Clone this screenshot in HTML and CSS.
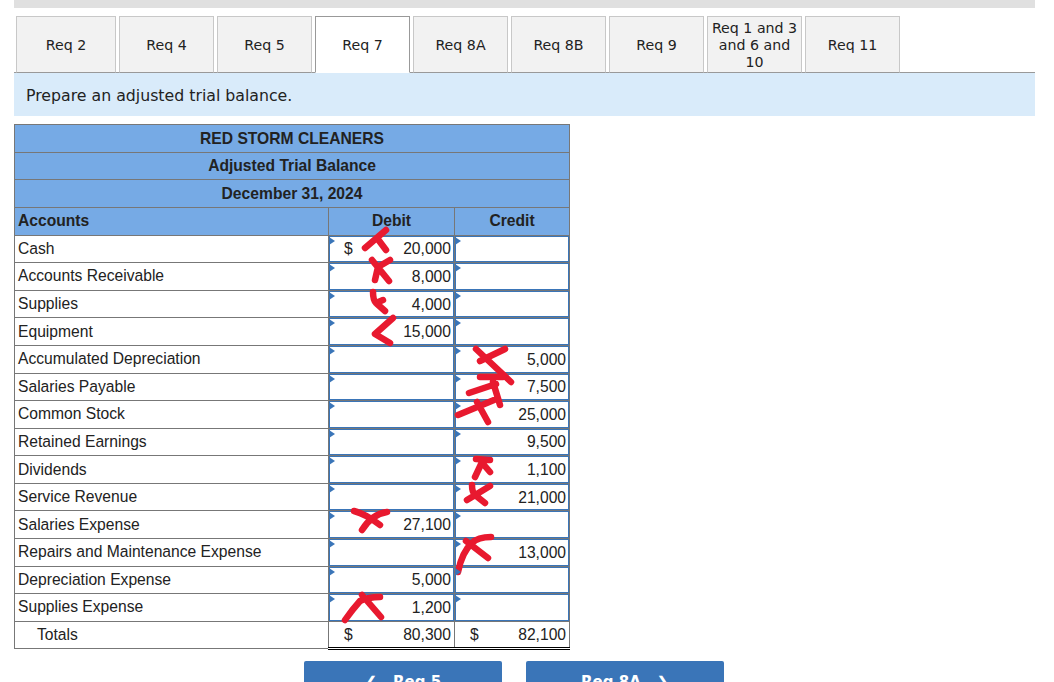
FILE: index.html
```html
<!DOCTYPE html>
<html lang="en">
<head>
<meta charset="utf-8">
<title>Adjusted Trial Balance</title>
<link rel="stylesheet" href="styles.css">
</head>
<body>
<main class="page">
  <div class="topbar"></div>
  <nav class="tabs">
    <div class="tab first">Req 2</div>
    <div class="tab second">Req 4</div>
    <div class="tab">Req 5</div>
    <div class="tab active">Req 7</div>
    <div class="tab">Req 8A</div>
    <div class="tab">Req 8B</div>
    <div class="tab">Req 9</div>
    <div class="tab">Req 1 and 3 and 6 and 10</div>
    <div class="tab">Req 11</div>
  </nav>
  <div class="prompt">Prepare an adjusted trial balance.</div>
  <table class="sheet">
    <colgroup><col class="c-acc"><col class="c-deb"><col class="c-cre"></colgroup>
    <thead>
      <tr><th colspan="3" class="title">RED STORM CLEANERS</th></tr>
      <tr><th colspan="3" class="title">Adjusted Trial Balance</th></tr>
      <tr><th colspan="3" class="title">December 31, 2024</th></tr>
      <tr><th class="acc">Accounts</th><th>Debit</th><th>Credit</th></tr>
    </thead>
    <tbody>
      <tr><td class="name">Cash</td><td class="in"><div class="box"><span class="cur">$</span><span>20,000</span></div></td><td class="in"><div class="box"></div></td></tr>
      <tr><td class="name">Accounts Receivable</td><td class="in"><div class="box"><span></span><span>8,000</span></div></td><td class="in"><div class="box"></div></td></tr>
      <tr><td class="name">Supplies</td><td class="in"><div class="box"><span></span><span>4,000</span></div></td><td class="in"><div class="box"></div></td></tr>
      <tr><td class="name">Equipment</td><td class="in"><div class="box"><span></span><span>15,000</span></div></td><td class="in"><div class="box"></div></td></tr>
      <tr><td class="name">Accumulated Depreciation</td><td class="in"><div class="box"></div></td><td class="in"><div class="box"><span></span><span>5,000</span></div></td></tr>
      <tr><td class="name">Salaries Payable</td><td class="in"><div class="box"></div></td><td class="in"><div class="box"><span></span><span>7,500</span></div></td></tr>
      <tr><td class="name">Common Stock</td><td class="in"><div class="box"></div></td><td class="in"><div class="box"><span></span><span>25,000</span></div></td></tr>
      <tr><td class="name">Retained Earnings</td><td class="in"><div class="box"></div></td><td class="in"><div class="box"><span></span><span>9,500</span></div></td></tr>
      <tr><td class="name">Dividends</td><td class="in"><div class="box"></div></td><td class="in"><div class="box"><span></span><span>1,100</span></div></td></tr>
      <tr><td class="name">Service Revenue</td><td class="in"><div class="box"></div></td><td class="in"><div class="box"><span></span><span>21,000</span></div></td></tr>
      <tr><td class="name">Salaries Expense</td><td class="in"><div class="box"><span></span><span>27,100</span></div></td><td class="in"><div class="box"></div></td></tr>
      <tr><td class="name">Repairs and Maintenance Expense</td><td class="in"><div class="box"></div></td><td class="in"><div class="box"><span></span><span>13,000</span></div></td></tr>
      <tr><td class="name">Depreciation Expense</td><td class="in"><div class="box"><span></span><span>5,000</span></div></td><td class="in"><div class="box"></div></td></tr>
      <tr><td class="name">Supplies Expense</td><td class="in"><div class="box"><span></span><span>1,200</span></div></td><td class="in"><div class="box"></div></td></tr>
      <tr class="totals"><td class="name total-name">Totals</td><td class="sum"><div class="plain"><span class="cur">$</span><span>80,300</span></div></td><td class="sum"><div class="plain"><span class="cur">$</span><span>82,100</span></div></td></tr>
    </tbody>
  </table>
  <div class="pager">
    <a class="btn">&#10094;&nbsp;&nbsp;&nbsp;Req 5</a>
    <a class="btn">Req 8A&nbsp;&nbsp;&nbsp;&#10095;</a>
  </div>
  <svg class="marks" viewBox="0 0 1054 682" width="1054" height="682" aria-hidden="true">
    <path d="M365 248L386 230M377 238L386 250"/>
    <path d="M390 260L378 267L375 280M372 260L389 281"/>
    <path d="M373 292Q373 300 376 303L385 311M376 303L383 300"/>
    <path d="M393 318L375 334L390 343"/>
    <path d="M476 349L511 382M505 349L480 361"/>
    <path d="M480 377L503 377M469 393L496 384M493 382L500 405M458 415L494 400M477 402L488 422"/>
    <path d="M476 459L490 460M483 460L475 477M484 465L490 472"/>
    <path d="M490 486L467 500M472 485Q472 492 475 495L485 503"/>
    <path d="M354 511Q366 514 380 525M387 512Q372 514 362 530"/>
    <path d="M491 537Q478 537 472 543Q462 552 458 572M466 541L488 558"/>
    <path d="M380 597Q368 597 360 601Q352 610 345 620M362 595L381 617"/>
  </svg>
</main>
</body>
</html>
```
FILE: styles.css
```css
* { box-sizing: border-box; }
html, body { margin: 0; height: 100%; overflow: hidden; background: #fff; }
.page { position: relative; width: 1054px; height: 682px; overflow: hidden; padding: 0 19px 0 14px; color: #222; }
.topbar { height: 8px; background: #e0e0e0; }
.tabs { display: flex; align-items: stretch; gap: 3px; height: 64.5px; padding: 8px 0 0 2px; border-bottom: 1px solid #999; font: 14.2px/17px "DejaVu Sans", sans-serif; }
.tab { width: 95px; margin-bottom: -1px; padding: 2px 3px 0; display: flex; align-items: center; justify-content: center; text-align: center; background: #f2f2f2; border: 1px solid #c8c8c8; border-bottom-color: #999; }
.tab.first { width: 100px; }
.tab.second { width: 95px; }
.tab.active { background: #fff; border-color: #999; border-bottom: 1px solid #fff; position: relative; z-index: 1; }
.prompt { height: 43.5px; padding: 2px 12px 0; display: flex; align-items: center; background: #d9ebfa; font: 15.75px "DejaVu Sans", sans-serif; }
.sheet { margin-top: 8.3px; width: 555px; table-layout: fixed; border-collapse: collapse; font: 15.65px "Liberation Sans", Arial, sans-serif; }
.c-acc { width: 314px; }
.c-deb { width: 126px; }
.c-cre { width: 115px; }
.sheet tr { height: 27.58px; }
.sheet th { background: #76aae5; border: 1px solid #777; padding: 0 3px; font-weight: 700; }
.sheet th.acc { text-align: left; }
.sheet td { border: 1px solid #777; padding: 0; }
.sheet .name { padding: 0 3px; }
.sheet .total-name { padding-left: 22px; }
.in { position: relative; height: 27.58px; }
.in::before { content: ""; position: absolute; left: 0; top: 1px; z-index: 1; border-left: 6px solid #3a75b8; border-top: 4px solid transparent; border-bottom: 4px solid transparent; }
.box, .plain { height: 100%; display: flex; justify-content: space-between; align-items: center; line-height: 21px; }
.box { border: 1px solid #3a75b8; background: #fff; padding: 0 2px 0 14px; }
.plain { padding: 0 3px 0 15px; }
.sheet .sum { border-bottom: 3px double #000; }
.totals .sum { border-top: 1px solid #000; }
.pager { margin-top: 11px; margin-left: 290px; display: flex; gap: 24px; }
.btn { width: 198px; height: 42px; display: flex; justify-content: center; align-items: center; background: #3a75b8; border-radius: 2px; color: #fff; font: 700 15px "DejaVu Sans", sans-serif; }
.marks { position: absolute; left: 0; top: 0; pointer-events: none; }
.marks path { fill: none; stroke: #e8192f; stroke-width: 6.5; stroke-linecap: round; stroke-linejoin: round; }
```
